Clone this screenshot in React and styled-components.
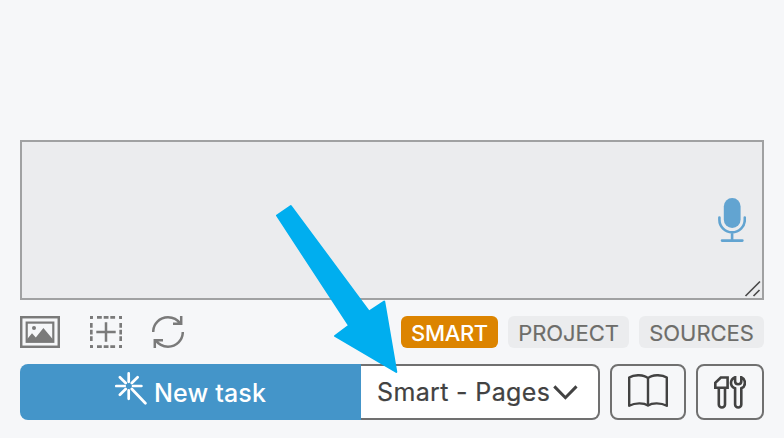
import React from 'react';
import styled, { createGlobalStyle } from 'styled-components';

const GlobalStyle = createGlobalStyle`
  * {
    box-sizing: border-box;
  }

  body {
    margin: 0;
    background-color: #f6f7f9;
    font-family: Inter, 'Liberation Sans', sans-serif;
  }
`;

const Panel = styled.div`
  position: relative;
  display: flex;
  flex-direction: column;
  justify-content: flex-end;
  gap: 16px;
  height: 438px;
  padding: 0 20px 18px;
  overflow: hidden;
`;

const PromptBox = styled.div`
  position: relative;
  display: flex;
  align-items: center;
  justify-content: flex-end;
  height: 160px;
  padding-right: 16px;
  border: 2px solid #a0a1a2;
  background-color: #ebecee;
`;

const ResizeHandle = styled.svg`
  position: absolute;
  right: 0;
  bottom: 0;
`;

const Toolbar = styled.div`
  display: flex;
  justify-content: space-between;
  height: 32px;
`;

const ToolIcons = styled.div`
  display: flex;
  gap: 30px;
  color: #7a7a7a;
`;

const Tags = styled.div`
  display: flex;
  gap: 10px;
`;

const Tag = styled.div`
  display: flex;
  align-items: center;
  justify-content: center;
  width: ${props => props.$width}px;
  padding-top: 2px;
  border-radius: 6px;
  font-size: 22px;
  font-weight: ${props => (props.$active ? 500 : 400)};
  letter-spacing: ${props => (props.$active ? -0.35 : -0.05)}px;
  white-space: nowrap;
  color: ${props => (props.$active ? '#ffffff' : '#6d6d6a')};
  -webkit-text-stroke: ${props => (props.$active ? 0 : 0.15)}px currentColor;
  background-color: ${props => (props.$active ? '#dc8400' : '#ebecee')};
`;

const Actions = styled.div`
  display: flex;
  gap: 10px;
  height: 56px;
`;

const TaskGroup = styled.div`
  display: flex;
  flex: 1;
`;

const NewTaskButton = styled.div`
  display: flex;
  align-items: center;
  justify-content: center;
  gap: 7px;
  width: 341px;
  border-radius: 8px 0 0 8px;
  font-size: 25px;
  font-weight: 500;
  color: #ffffff;
  background-color: #4495c9;

  svg {
    margin-bottom: 8px;
  }
`;

const ButtonText = styled.span`
  padding-top: 2px;
  letter-spacing: 0.15px;
  white-space: nowrap;
`;

const ModeSelect = styled.div`
  display: flex;
  flex: 1;
  align-items: center;
  justify-content: space-between;
  padding: 0 20px 0 16px;
  border: 2px solid #707070;
  border-left: none;
  border-radius: 0 8px 8px 0;
  font-size: 25px;
  letter-spacing: 0.35px;
  white-space: nowrap;
  color: #424242;
  -webkit-text-stroke: 0.2px currentColor;
  background-color: #ffffff;
`;

const IconButton = styled.div`
  display: flex;
  align-items: center;
  justify-content: center;
  width: ${props => props.$width}px;
  padding-bottom: ${props => props.$lift || 0}px;
  border: 2px solid #707070;
  border-radius: 8px;
  color: #424242;
`;

const Pointer = styled.svg`
  position: absolute;
  left: 270px;
  top: 200px;
`;

const MicIcon = () => (
  <svg width="28" height="44" viewBox="0 0 28 44" fill="none" stroke="#62a4d1" strokeWidth="2.6" strokeLinecap="round">
    <rect x="5.8" y="0" width="16.8" height="30" rx="8.4" fill="#62a4d1" stroke="none" />
    <path d="M1.4 19.5v2.2a12.7 12.7 0 0 0 25.4 0v-2.2M14.1 34.5v8M4 42.6h20.4" />
  </svg>
);

const ImageIcon = () => (
  <svg width="40" height="32" viewBox="0 0 40 32" fill="none" stroke="currentColor" strokeWidth="2.2">
    <rect x="1.2" y="1.2" width="37.6" height="29.6" strokeWidth="2.5" />
    <rect x="6.7" y="6.6" width="26.6" height="19.2" />
    <circle cx="14" cy="11.9" r="2" fill="currentColor" stroke="none" />
    <path d="M7 23.2l5-6 3.8 4.4 7.6-9.7 9.8 11.8v1.5H7z" fill="currentColor" stroke="none" />
  </svg>
);

const AddAreaIcon = () => (
  <svg width="32" height="32" viewBox="0 0 32 32" fill="none" stroke="currentColor" strokeWidth="2.7">
    <path d="M1.3 3V1.3H3M29 1.3h1.7V3M30.7 29v1.7H29M3 30.7H1.3V29" />
    <path d="M7 1.3h4.8M13.7 1.3h4.8M20.3 1.3h4.8M7 30.7h4.8M13.7 30.7h4.8M20.3 30.7h4.8" />
    <path d="M1.3 7v4.8M1.3 13.7v4.8M1.3 20.3v4.8M30.7 7v4.8M30.7 13.7v4.8M30.7 20.3v4.8" />
    <path d="M16 6.3v19.4M6.3 16h19.4" strokeWidth="2.5" />
  </svg>
);

const RefreshIcon = () => (
  <svg width="32" height="32" viewBox="0 0 32 32" fill="none" stroke="currentColor" strokeWidth="2.5">
    <path d="M1.2 16C1.2 7.8 7.6 1.3 16 1.3c5.4 0 9.5 2.3 12.6 6.6M29.2 0v7.8H21" />
    <path d="M30.8 16c0 8.2-6.4 14.7-14.8 14.7-5.4 0-9.5-2.3-12.6-6.6M2.8 32v-7.8H11" />
  </svg>
);

const WandIcon = () => (
  <svg width="32" height="33" viewBox="0 0 32 33" fill="none" stroke="currentColor" strokeWidth="2.7" strokeLinecap="round">
    <path d="M13.7 1.4v8.4M13.7 18.4v8.4M1.3 14h8.4M18 14h8.4M4.9 5.2l5.8 5.8M22.6 5.2l-5.8 5.8M10.7 17l-5.8 5.8M16.8 17l13.6 14.2" />
  </svg>
);

const ChevronIcon = () => (
  <svg width="25" height="15" viewBox="0 0 25 15" fill="none" stroke="currentColor" strokeWidth="3">
    <path d="M1.3 1.4l11.1 11.3L23.5 1.4" />
  </svg>
);

const BookIcon = () => (
  <svg width="40" height="34" viewBox="0 0 40 34" fill="none" stroke="currentColor" strokeWidth="2.4" strokeLinejoin="round">
    <path d="M20 4.2C16 .3 6 .3 1.2 3.6v28.2C7 28.6 16 28.6 20 31.6c4-3 13-3 18.8.2V3.6C34 .3 24 .3 20 4.2zv27.5" />
  </svg>
);

const ToolsIcon = () => (
  <svg width="32" height="33" viewBox="0 0 32 33" fill="none" stroke="currentColor" strokeWidth="2.6">
    <path d="M1.3 11.7V6.8L6.8 1.5h6.8v10.2zM4.8 11.7v16.7a3.1 3.1 0 0 0 6.2 0V11.7" />
    <path d="M21.1 1.2c-2.5 1-4.1 3.2-4.1 5.8 0 2.5 1.6 4.4 4.1 5.3v16.1a3.1 3.1 0 0 0 6.2 0V12.3c2.3-.9 3.6-2.8 3.6-5.3 0-2.6-1.3-4.8-3.6-5.8v4.1c0 3.9-6.2 3.9-6.2 0z" />
  </svg>
);

const App = () => {
  return (
    <Panel>
      <GlobalStyle />
      <PromptBox>
        <MicIcon />
        <ResizeHandle width="20" height="20" viewBox="0 0 20 20" stroke="#4c4c4c" strokeWidth="1.7">
          <path d="M3.5 18L18 3.5M11.5 18l6-6" />
        </ResizeHandle>
      </PromptBox>
      <Toolbar>
        <ToolIcons>
          <ImageIcon />
          <AddAreaIcon />
          <RefreshIcon />
        </ToolIcons>
        <Tags>
          <Tag $active $width={97}>SMART</Tag>
          <Tag $width={121}>PROJECT</Tag>
          <Tag $width={125}>SOURCES</Tag>
        </Tags>
      </Toolbar>
      <Actions>
        <TaskGroup>
          <NewTaskButton>
            <WandIcon />
            <ButtonText>New task</ButtonText>
          </NewTaskButton>
          <ModeSelect>
            <span>Smart - Pages</span>
            <ChevronIcon />
          </ModeSelect>
        </TaskGroup>
        <IconButton $width={76} $lift={2}>
          <BookIcon />
        </IconButton>
        <IconButton $width={68}>
          <ToolsIcon />
        </IconButton>
      </Actions>
      <Pointer width="140" height="180" viewBox="0 0 140 180" fill="#00aeef" stroke="#00aeef" strokeWidth="2" strokeLinejoin="round">
        <path d="M7 15.5L20.8 6.1 99 111.5l15.2-10L126.3 172 65 136l14-10.5z" />
      </Pointer>
    </Panel>
  );
};

export default App;
